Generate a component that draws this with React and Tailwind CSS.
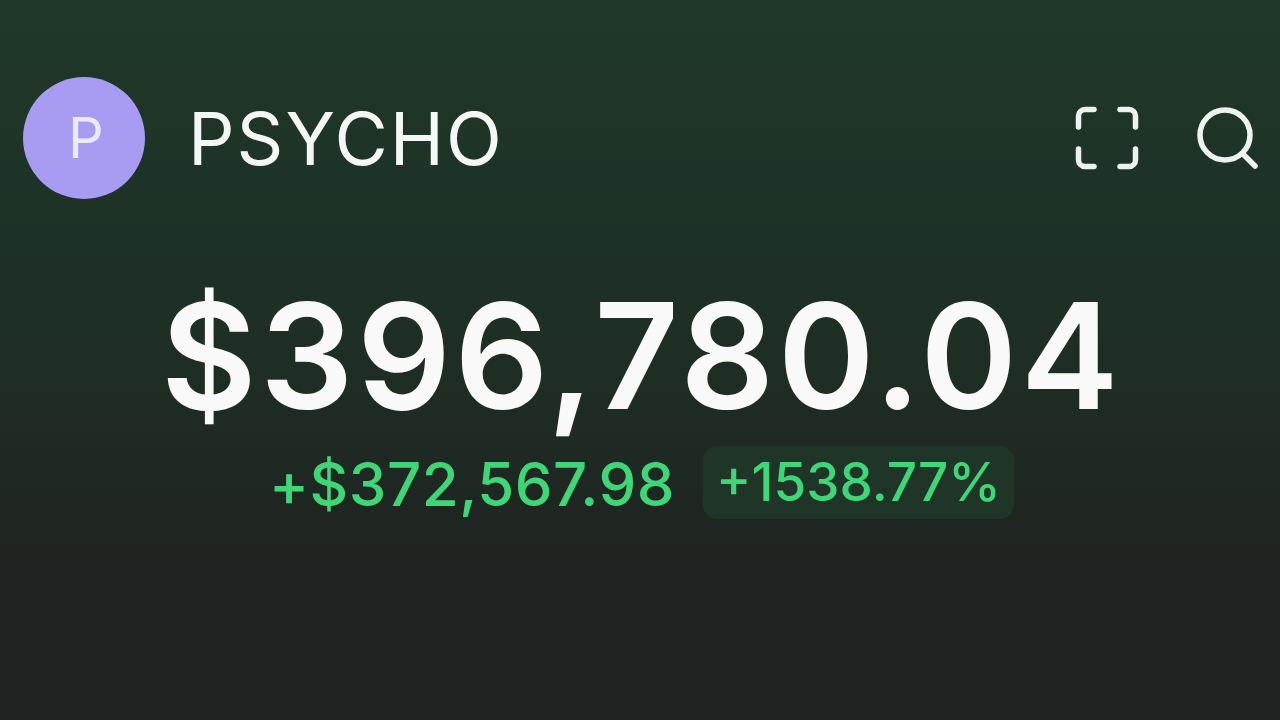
const FONT = "font-['Inter',sans-serif]";

const ScanIcon = () => (
  <svg width="64" height="64" viewBox="0 0 64 64" fill="none" stroke="#eef2ee" strokeWidth="5.5" strokeLinecap="round" strokeLinejoin="round">
    <path d="M3.5 21V10a6.5 6.5 0 0 1 6.5-6.5h9" />
    <path d="M45 3.5h9a6.5 6.5 0 0 1 6.5 6.5v11" />
    <path d="M60.5 43v11a6.5 6.5 0 0 1-6.5 6.5h-9" />
    <path d="M19 60.5h-9A6.5 6.5 0 0 1 3.5 54V43" />
  </svg>
);

const SearchIcon = () => (
  <svg width="62" height="62" viewBox="0 0 62 62" fill="none" stroke="#eef2ee" strokeWidth="5.5" strokeLinecap="round">
    <circle cx="28" cy="28" r="25" />
    <path d="M46 47l12 12" />
  </svg>
);

export default function App() {
  return (
    <div className={`${FONT} w-[1280px] h-[720px] overflow-hidden flex flex-col bg-gradient-to-b from-[#1e3829] via-[#1e2e25] via-50% to-[#1f2321] to-80%`}>
      <header className="flex items-center pl-[23px] pr-[21px] pt-[77px]">
        <div className="w-[122px] h-[122px] rounded-full bg-[#a79bf2] flex items-center justify-center pl-[4px] text-[#ece9fb] text-[56px] font-normal leading-none">
          P
        </div>
        <h1 className="ml-[43px] text-[#f5f7f5] text-[73px] leading-none tracking-[2px]">PSYCHO</h1>
        <div className="ml-auto flex items-center gap-[58px]">
          <ScanIcon />
          <SearchIcon />
        </div>
      </header>

      <main className="flex flex-col items-center mt-[67px]">
        <p className="ml-[3px] text-[#f8f9f8] text-[147px] leading-[180px] font-semibold tracking-[3.4px]">$396,780.04</p>
        <div className="ml-[3px] flex items-center gap-[28px] text-[#3fd677] font-medium leading-none">
          <span className="text-[60px] tracking-[0.5px] translate-y-[1px]">+$372,567.98</span>
          <span className="bg-[#1e3528] rounded-[14px] px-[13px] h-[73px] flex items-center text-[53px]">+1538.77%</span>
        </div>
      </main>
    </div>
  );
}
